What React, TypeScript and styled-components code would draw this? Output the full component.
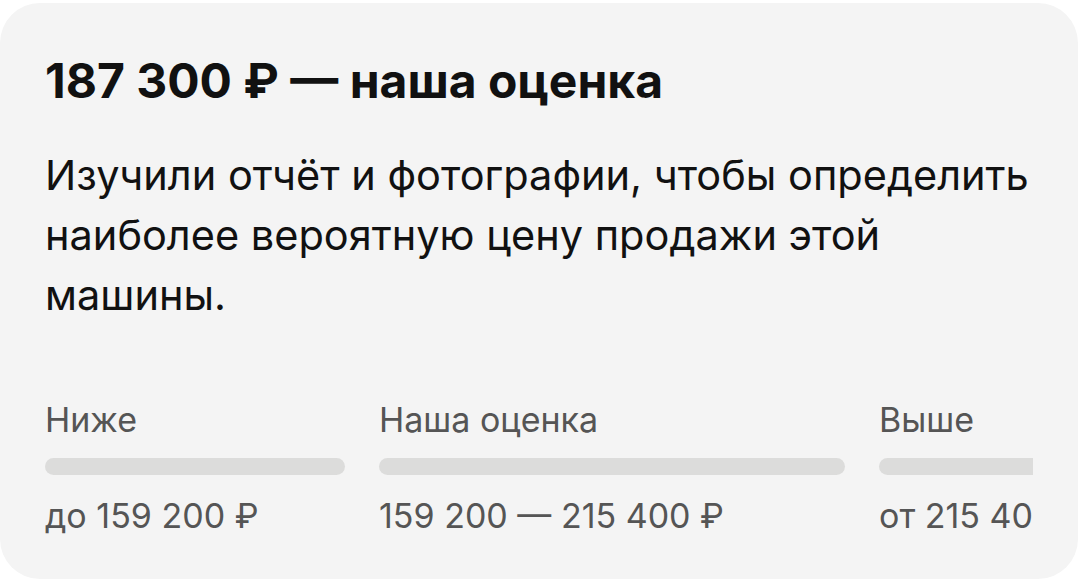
import styled, { createGlobalStyle } from 'styled-components';

const GlobalStyle = createGlobalStyle`
  html, body {
    margin: 0;
    padding: 0;
    background: #ffffff;
    font-family: Inter, 'Noto Sans', sans-serif;
    -webkit-font-smoothing: antialiased;
  }
`;

type Range = { label: string; value: string; width: number };

const ranges: Range[] = [
  { label: 'Ниже', value: 'до 159 200 ₽', width: 300 },
  { label: 'Наша оценка', value: '159 200 — 215 400 ₽', width: 466 },
  { label: 'Выше', value: 'от 215 400 ₽', width: 300 },
];

export default function App() {
  return (
    <>
      <GlobalStyle />
      <Card>
        <Title>187 300 ₽ — наша оценка</Title>
        <Description>
          Изучили отчёт и фотографии, чтобы определить наиболее вероятную цену
          продажи этой машины.
        </Description>
        <Scale>
          {ranges.map((r) => (
            <Column key={r.label} $width={r.width}>
              <Label>{r.label}</Label>
              <Bar />
              <Value>{r.value}</Value>
            </Column>
          ))}
        </Scale>
      </Card>
    </>
  );
}

const Card = styled.div`
  box-sizing: border-box;
  margin: 3px 1px 0 0;
  height: 576px;
  padding: 48px 45px 0;
  border-radius: 40px;
  background: #f4f4f4;
  overflow: hidden;
`;

const Title = styled.h1`
  margin: 0;
  font-size: 48px;
  line-height: 60px;
  font-weight: 700;
  color: #111111;
  letter-spacing: 0;
`;

const Description = styled.p`
  margin: 34px 0 0;
  font-size: 41.5px;
  line-height: 60px;
  font-weight: 400;
  color: #111111;
`;

const Scale = styled.div`
  display: flex;
  gap: 34px;
  margin-top: 75px;
  overflow: hidden;
`;

const Column = styled.div<{ $width: number }>`
  flex: 0 0 ${(p) => p.$width}px;
  display: flex;
  flex-direction: column;
  white-space: nowrap;
`;

const Label = styled.div`
  font-size: 34px;
  line-height: 40px;
  color: #555555;
`;

const Bar = styled.div`
  height: 17px;
  margin-top: 18px;
  border-radius: 9px;
  background: #dcdcdb;
`;

const Value = styled.div`
  margin-top: 21px;
  font-size: 34px;
  line-height: 40px;
  color: #555555;
`;
